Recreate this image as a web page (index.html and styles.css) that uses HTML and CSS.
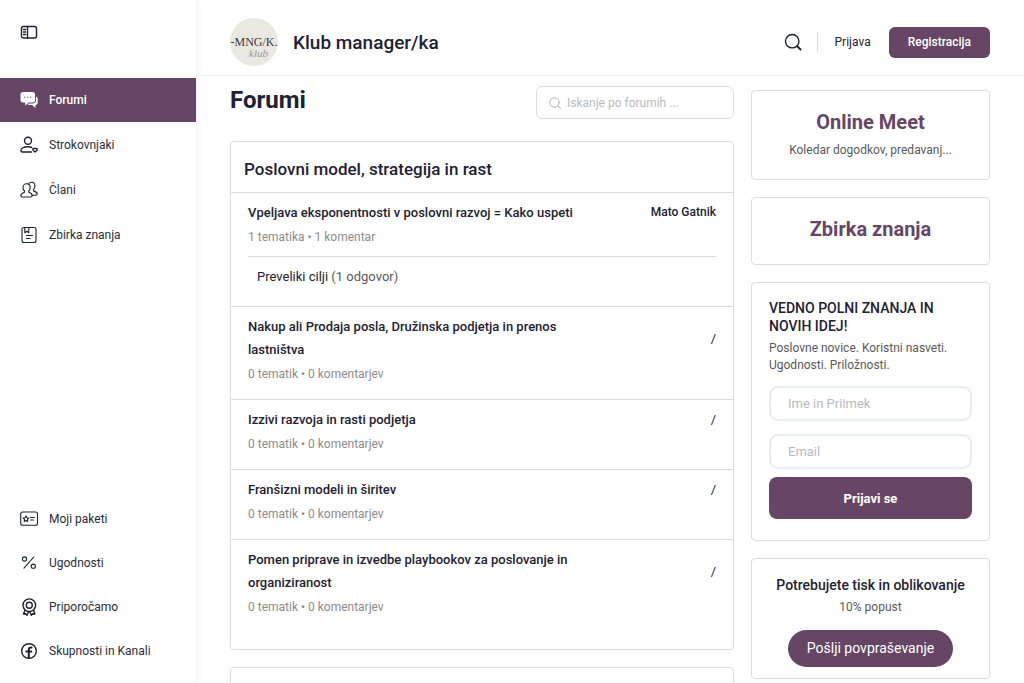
FILE: index.html
```html
<!DOCTYPE html>
<html lang="sl">
<head>
    <meta charset="UTF-8">
    <meta name="viewport" content="width=device-width, initial-scale=1.0">
    <title>Forumi - Klub manager/ka</title>
    <link rel="stylesheet" href="styles.css">
</head>
<body>
    <aside class="sidebar">
        <button class="menu-toggle" aria-label="Meni">
            <svg width="18" height="18" viewBox="0 0 18 18"><rect x="1.5" y="3.5" width="15" height="11.5" rx="2"/><path d="M7.5 3.5V15M3.5 6.5h2M3.5 9h2M3.5 11.5h2"/></svg>
        </button>
        <nav class="menu menu-top">
            <a href="#" class="active">
                <svg class="filled" width="18" height="18" viewBox="0 0 18 18"><path d="M3 1h9.500A2.500 2.500 0 0 1 15 3.500V9a2.500 2.500 0 0 1-2.500 2.500H8.500L5.200 14.800V11.500H3A2.500 2.500 0 0 1 .5 9V3.500A2.500 2.500 0 0 1 3 1z"/><path d="M16 5.500c1.100.4 1.700 1.200 1.700 2.500v3.500c0 1.500-.9 2.300-2.200 2.500V17L12 14H9.500c-.8 0-1.400-.3-1.800-.8l.8-.7H12.500c2.200 0 3.500-1.300 3.500-3.500z"/><path class="dots" d="M4.500 6.200h.5M7.500 6.200h.5M10.500 6.200h.5"/></svg>
                Forumi
            </a>
            <a href="#">
                <svg width="18" height="18" viewBox="0 0 18 18"><circle cx="8" cy="4.800" r="3.500"/><path d="M11.500 11.500c-1-.5-2.300-.7-3.800-.7-4 0-6.700 1.700-6.700 3.700 0 .9.500 1.500 1.400 1.500h9"/><path d="M13 12.500h4v1.800l-2 1.700-2-1.700z"/></svg>
                Strokovnjaki
            </a>
            <a href="#">
                <svg class="thin" width="18" height="18" viewBox="0 0 18 18"><path d="M6.500 2.800C4.500 2.800 3 4.200 3 6.400c0 1.800.7 2.800 1.500 3.600v1.300C2.500 12 .8 12.800.8 14.500c0 1 .5 1.500 1.500 1.500h8.400c1 0 1.500-.5 1.500-1.500 0-1.700-1.500-2.500-3.400-3.200V10c.8-.8 1.400-1.800 1.400-3.600 0-2.200-1.400-3.600-3.700-3.600z"/><path d="M8.500 3c.6-1.200 1.600-1.700 2.900-1.700 2.200 0 3.500 1.500 3.500 3.700 0 1.700-.6 2.800-1.400 3.600v1.300c2 .6 3.700 1.500 3.700 3.200 0 .8-.4 1.200-1.200 1.200h-4"/></svg>
                Člani
            </a>
            <a href="#">
                <svg class="thin" width="18" height="18" viewBox="0 0 18 18"><rect x="2" y="1.500" width="14" height="15" rx="2"/><path d="M4.800 1.500v5.200l2-1.500 2 1.500V1.500M6.500 9.500h6M6.500 12.500h3.500"/></svg>
                Zbirka znanja
            </a>
        </nav>
        <nav class="menu menu-bottom">
            <a href="#">
                <svg class="thin" width="18" height="18" viewBox="0 0 18 18"><rect x=".7" y="2" width="16.800" height="13.300" rx="2"/><path d="M6 5.900l.9 1.800 2 .3-1.500 1.400.4 2L6 10.500l-1.800.9.400-2L3.100 8l2-.3zM10.500 7.500h4M10.500 10h3"/></svg>
                Moji paketi
            </a>
            <a href="#">
                <svg class="thin" width="18" height="18" viewBox="0 0 18 18"><circle cx="4.500" cy="5" r="2.100"/><circle cx="13.300" cy="12.200" r="2.100"/><path d="M13.800 3L4 14.200"/></svg>
                Ugodnosti
            </a>
            <a href="#">
                <svg width="18" height="18" viewBox="0 0 18 18"><circle cx="9.300" cy="7.200" r="6.300"/><circle cx="9.300" cy="7.200" r="3"/><path d="M5 12.300L3.500 16l2.200-.3L7 17.200 8.500 14M13.600 12.300l1.300 3.700-2.200-.3-1.300 1.500L10 14"/></svg>
                Priporočamo
            </a>
            <a href="#">
                <svg width="18" height="18" viewBox="0 0 18 18"><circle cx="9" cy="9" r="7.300"/><path class="bold" d="M8.800 15.500V7.500c0-1.400.8-2.200 2.700-2M6.300 9.600h5"/></svg>
                Skupnosti in Kanali
            </a>
        </nav>
    </aside>

    <div class="page">
        <header class="header">
            <a href="#" class="brand">
                <svg class="logo" width="48" height="48" viewBox="0 0 48 48">
                    <circle cx="24" cy="24" r="24" fill="#e9e8e1"/>
                    <text x="24" y="28" class="logo-text" text-anchor="middle">-MNG/K.</text>
                    <text x="19" y="39" class="logo-script">klub</text>
                </svg>
                <span>Klub manager/ka</span>
            </a>
            <div class="header-actions">
                <button class="search-button" aria-label="Iskanje">
                    <svg width="18" height="18" viewBox="0 0 18 18"><circle cx="8.200" cy="8.200" r="6.700"/><path class="bold" d="M13 13l3.500 3.500"/></svg>
                </button>
                <a href="#" class="login">Prijava</a>
                <a href="#" class="register">Registracija</a>
            </div>
        </header>

        <div class="content">
            <main class="forums">
                <div class="forums-top">
                    <h1>Forumi</h1>
                    <form class="forum-search">
                        <svg width="12" height="12" viewBox="0 0 12 12"><circle cx="5.500" cy="5.500" r="4.700"/><path d="M9 9l2.500 2.500"/></svg>
                        <input type="search" placeholder="Iskanje po forumih ..." aria-label="Iskanje po forumih">
                    </form>
                </div>

                <section class="forum-card">
                    <h2>Poslovni model, strategija in rast</h2>
                    <article class="forum">
                        <div class="forum-row">
                            <h3><a href="#">Vpeljava eksponentnosti v poslovni razvoj = Kako uspeti</a></h3>
                            <a href="#" class="author">Mato Gatnik</a>
                        </div>
                        <p class="meta">1 tematika • 1 komentar</p>
                        <p class="topic"><a href="#">Preveliki cilji</a> (1 odgovor)</p>
                    </article>
                    <article class="forum">
                        <div class="forum-row">
                            <h3><a href="#">Nakup ali Prodaja posla, Družinska podjetja in prenos lastništva</a></h3>
                            <span>/</span>
                        </div>
                        <p class="meta">0 tematik • 0 komentarjev</p>
                    </article>
                    <article class="forum">
                        <div class="forum-row">
                            <h3><a href="#">Izzivi razvoja in rasti podjetja</a></h3>
                            <span>/</span>
                        </div>
                        <p class="meta">0 tematik • 0 komentarjev</p>
                    </article>
                    <article class="forum">
                        <div class="forum-row">
                            <h3><a href="#">Franšizni modeli in širitev</a></h3>
                            <span>/</span>
                        </div>
                        <p class="meta">0 tematik • 0 komentarjev</p>
                    </article>
                    <article class="forum">
                        <div class="forum-row">
                            <h3><a href="#">Pomen priprave in izvedbe playbookov za poslovanje in organiziranost</a></h3>
                            <span>/</span>
                        </div>
                        <p class="meta">0 tematik • 0 komentarjev</p>
                    </article>
                </section>

                <section class="forum-card next-card"></section>
            </main>

            <aside class="widgets">
                <section class="widget">
                    <h2><a href="#">Online Meet</a></h2>
                    <p>Koledar dogodkov, predavanj...</p>
                </section>
                <section class="widget">
                    <h2><a href="#">Zbirka znanja</a></h2>
                </section>
                <section class="widget newsletter">
                    <h3>VEDNO POLNI ZNANJA IN NOVIH IDEJ!</h3>
                    <p>Poslovne novice. Koristni nasveti. Ugodnosti. Priložnosti.</p>
                    <form>
                        <input type="text" placeholder="Ime in Priimek" aria-label="Ime in Priimek">
                        <input type="email" placeholder="Email" aria-label="Email">
                        <button type="button">Prijavi se</button>
                    </form>
                </section>
                <section class="widget offer">
                    <h3>Potrebujete tisk in oblikovanje</h3>
                    <p>10% popust</p>
                    <a href="#" class="offer-button">Pošlji povpraševanje</a>
                </section>
            </aside>
        </div>
    </div>
</body>
</html>
```
FILE: styles.css
```css
* {
    box-sizing: border-box;
}

body {
    display: flex;
    height: 100vh;
    margin: 0;
    overflow: hidden;
    font-family: Roboto, sans-serif;
    font-size: 12px;
    color: #5a5a5a;
    background-color: #fff;
}

h1, h2, h3, p {
    margin: 0;
}

h1, h2, h3 {
    color: #1e2132;
}

a {
    color: inherit;
    text-decoration: none;
}

button {
    padding: 0;
    border: none;
    background: none;
    font-family: inherit;
    cursor: pointer;
}

input {
    width: 100%;
    font-family: inherit;
    background-color: #fff;
}

svg {
    display: block;
    flex-shrink: 0;
    fill: none;
    stroke: #1e2132;
    stroke-width: 1.4;
    stroke-linecap: round;
    stroke-linejoin: round;
}

svg.thin {
    stroke-width: 1.1;
}

svg .bold {
    stroke-width: 2;
}

/* Sidebar */
.sidebar {
    display: flex;
    flex-direction: column;
    flex: 0 0 196px;
    padding-bottom: 10px;
    box-shadow: 0 0 8px rgba(0, 0, 0, 0.08);
}

.menu-toggle {
    align-self: flex-start;
    margin: 23px 20px 37px;
}

.menu a {
    display: flex;
    align-items: center;
    gap: 11px;
    height: 44px;
    padding-left: 20px;
    color: #2b2d3c;
}

.menu a.active {
    background-color: #674665;
    color: #fff;
    font-weight: 500;
}

.menu-top {
    display: grid;
    gap: 1px;
}

.menu-bottom {
    margin-top: auto;
}

svg.filled {
    fill: #fff;
    stroke: none;
}

svg .dots {
    stroke: #674665;
    stroke-width: 1;
}

/* Header */
.page {
    flex: 1;
    min-width: 0;
    overflow: hidden;
}

.header {
    display: flex;
    justify-content: space-between;
    align-items: center;
    height: 76px;
    padding: 9px 34px 0;
    border-bottom: 1px solid #f1f1f3;
}

.brand {
    display: flex;
    align-items: center;
    gap: 15px;
    font-size: 19px;
    font-weight: 500;
    color: #1e2132;
}

.logo {
    overflow: visible;
    stroke: none;
}

.logo-text {
    font-family: "Liberation Serif", serif;
    font-size: 12px;
    fill: #3c3c3c;
}

.logo-script {
    font-family: "Liberation Serif", serif;
    font-size: 11px;
    font-style: italic;
    fill: #999;
}

.header-actions {
    display: flex;
    align-items: center;
    color: #1e2132;
}

.login {
    margin-left: 15px;
    padding: 3px 18px 3px 17px;
    border-left: 1px solid #dcdde1;
}

.register {
    padding: 0 19px;
    border-radius: 6px;
    background-color: #674665;
    color: #fff;
    font-weight: 500;
    line-height: 31px;
}

/* Forums */
.content {
    display: grid;
    grid-template-columns: 1fr 239px;
    gap: 17px;
    padding: 10px 34px 0;
}

.forums-top {
    display: flex;
    justify-content: space-between;
    margin-bottom: 22px;
}

h1 {
    font-size: 24px;
    font-weight: 700;
    line-height: 29px;
}

.forum-search {
    display: flex;
    align-items: center;
    gap: 6px;
    width: 198px;
    height: 33px;
    padding: 0 12px;
    border: 1px solid #dcdde1;
    border-radius: 6px;
}

.forum-search svg {
    stroke: #b0b2b8;
    stroke-width: 1;
}

.forum-search input {
    padding: 0;
    border: none;
    font-size: 12px;
}

input::placeholder {
    color: #b9bbc0;
}

.forum-card {
    margin-bottom: 17px;
    padding-bottom: 17px;
    border: 1px solid #dcdde1;
    border-radius: 4px;
}

.forum-card h2 {
    padding: 16px 13px 11px;
    font-size: 17px;
    font-weight: 500;
    line-height: 23px;
}

.forum {
    padding: 8px 17px 15px;
    border-top: 1px solid #dcdde1;
}

.forum-row {
    display: flex;
    justify-content: space-between;
    align-items: center;
    color: #1e2132;
    font-size: 13px;
    line-height: 23px;
}

.forum-row h3 {
    max-width: 330px;
    font-size: 13px;
    font-weight: 500;
}

.author {
    font-size: 12px;
    font-weight: 500;
}

.meta {
    margin-top: 3px;
    color: #8c8c8c;
    line-height: 20px;
}

.topic {
    margin-top: 9px;
    padding: 10px 9px 4px;
    border-top: 1px solid #dcdde1;
    font-size: 13px;
    line-height: 20px;
}

.topic a {
    color: #1e2132;
}

.next-card {
    height: 80px;
}

/* Widgets */
.widgets {
    display: flex;
    flex-direction: column;
    gap: 17px;
    padding-top: 4px;
}

.widget {
    padding: 17px;
    border: 1px solid #dcdde1;
    border-radius: 4px;
    text-align: center;
}

.widget h2 {
    color: #674665;
    font-size: 20px;
    font-weight: 700;
    line-height: 28px;
}

.widget h2 + p {
    margin: 6px 0 3px;
}

.widget h2:last-child {
    margin-bottom: 4px;
}

.widget p {
    line-height: 17px;
}

.widget h3 {
    font-size: 14px;
    font-weight: 500;
    line-height: 18px;
}

.newsletter {
    padding: 16px 17px 21px;
    text-align: left;
}

.newsletter p {
    margin: 5px 0 12px;
}

.newsletter input {
    display: block;
    height: 35px;
    margin-bottom: 13px;
    padding: 0 17px;
    border: 2px solid #e7eef0;
    border-radius: 9px;
    font-size: 13px;
}

.newsletter input[type="email"] {
    margin-bottom: 8px;
}

.newsletter button {
    width: 100%;
    height: 42px;
    border-radius: 8px;
    background-color: #674665;
    color: #fff;
    font-size: 13px;
    font-weight: 700;
}

.offer {
    padding: 17px 17px 11px;
}

.offer p {
    margin: 5px 0 14px;
}

.offer-button {
    display: inline-block;
    padding: 0 19px;
    border-radius: 19px;
    background-color: #674665;
    color: #fff;
    font-size: 14px;
    line-height: 37px;
}
```
